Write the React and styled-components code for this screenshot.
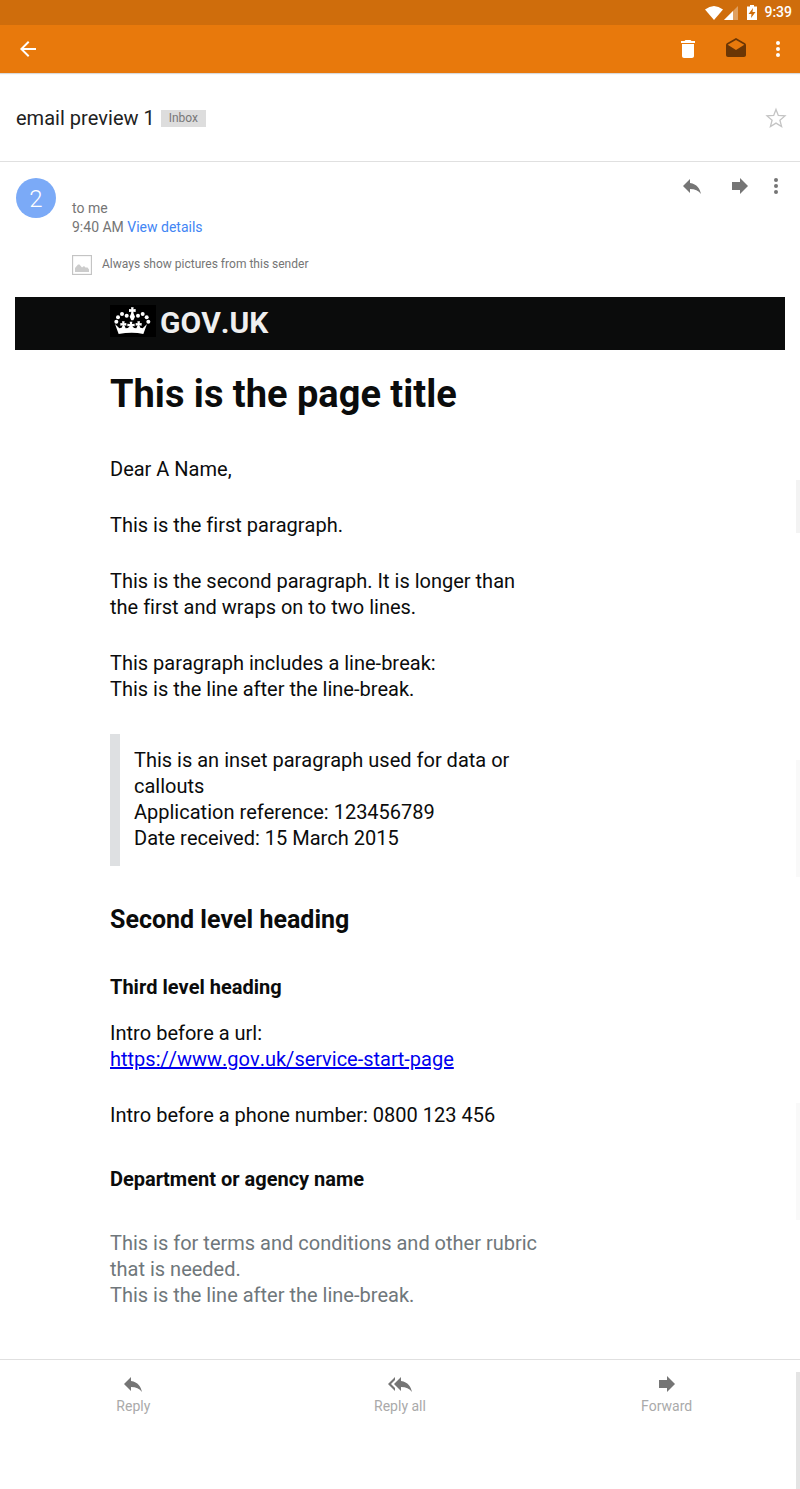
import React from "react";
import styled, { createGlobalStyle } from "styled-components";

const GlobalStyle = createGlobalStyle`
  *, *::before, *::after { box-sizing: border-box; }
  body {
    margin: 0;
    background: #fff;
    font-family: Roboto, "Liberation Sans", sans-serif;
  }
  h1, h2, h3, p { margin: 0; }
`;

const Screen = styled.div`
  position: relative;
  min-height: 100vh;
  display: flex;
  flex-direction: column;
`;

const StatusBar = styled.div`
  display: flex;
  align-items: center;
  justify-content: flex-end;
  height: 25px;
  padding: 0 8px;
  background: #cf6d0c;
  color: #fff;
  font-size: 14px;
  font-weight: 500;
  line-height: 25px;
`;

const StatusIcons = styled.svg`
  display: block;
  margin-right: 6px;
`;

const Toolbar = styled.header`
  display: flex;
  align-items: center;
  height: 48px;
  padding: 0 16px;
  background: #e8790c;
  color: #fff;
  box-shadow: 0 1px 1px rgba(0, 0, 0, 0.15);
`;

const ToolbarActions = styled.div`
  display: flex;
  margin-left: auto;
  gap: 24px;
`;

const IconButton = styled.button`
  display: flex;
  align-items: center;
  justify-content: center;
  width: ${({ $width = 24 }) => $width}px;
  height: 24px;
  padding: 0;
  border: 0;
  background: none;
  color: inherit;
  cursor: pointer;

  svg {
    flex: none;
  }
`;

const SubjectRow = styled.section`
  display: flex;
  align-items: center;
  height: 89px;
  padding: 2px 12px 0 16px;
  border-bottom: 1px solid #e0e0e0;
`;

const Subject = styled.h1`
  color: #212121;
  font-size: 20px;
  font-weight: 400;
  line-height: 26px;
  font-kerning: none;
`;

const Label = styled.span`
  height: 17px;
  margin: 0 auto 0 6px;
  padding: 0 8px;
  background: #ddd;
  color: #777;
  font-size: 12px;
  line-height: 17px;
`;

const StarButton = styled(IconButton)`
  color: #c4c4c4;
`;

const MessageHeader = styled.section`
  display: flex;
  align-items: flex-start;
  gap: 16px;
  padding: 16px 18px 0 16px;
  color: #757575;
`;

const Avatar = styled.div`
  flex: none;
  width: 40px;
  height: 40px;
  border-radius: 50%;
  background: #7baaf7;
  color: #fff;
  font-size: 24px;
  font-weight: 300;
  line-height: 42px;
  text-align: center;
`;

const Sender = styled.div`
  flex: 1;
  padding-top: 21px;
  font-size: 14px;
  line-height: 19px;
`;

const DetailsLink = styled.a`
  color: #4285f4;
  text-decoration: none;
`;

const ShowPictures = styled.button`
  display: flex;
  gap: 10px;
  margin-top: 18px;
  padding: 0;
  border: 0;
  background: none;
  color: #757575;
  font-family: inherit;
  font-size: 12px;
  line-height: 18px;
  font-kerning: none;
  cursor: pointer;
`;

const MessageActions = styled.div`
  display: flex;
  gap: 12px;
  margin-top: -4px;
`;

const Mail = styled.article`
  margin: 22px 15px 0;
  color: #0b0c0c;
  font-kerning: none;
  font-variant-ligatures: none;
`;

const Banner = styled.div`
  padding: 0 10px;
  background: #0b0c0c;
`;

const Column = styled.div`
  max-width: 580px;
  margin: 0 auto;
`;

const BrandLink = styled.a`
  display: flex;
  align-items: center;
  gap: 4px;
  height: 53px;
  color: #efefef;
  font-size: 30px;
  font-weight: 700;
  line-height: 52px;
  text-decoration: none;
`;

const Crown = styled.svg`
  display: block;
  margin-bottom: 6px;
`;

const Brand = styled.span`
  height: 53px;
`;

const Copy = styled.div`
  padding: 0 10px;
  font-size: 20px;
  line-height: 26px;
`;

const Title = styled.h1`
  padding: 21px 0 39px;
  font-size: 38px;
  font-weight: 700;
  line-height: 46px;
`;

const Paragraph = styled.p`
  max-width: 436px;
  margin-bottom: 30px;
`;

const Inset = styled.p`
  max-width: 436px;
  margin-top: 32px;
  padding: 13px 0 15px 14px;
  border-left: 10px solid #dee0e2;
`;

const Heading2 = styled.h2`
  padding: 38px 0 38px;
  font-size: 25px;
  font-weight: 700;
  line-height: 32px;
`;

const Heading3 = styled.h3`
  padding: ${({ $before = 0 }) => $before}px 0 ${({ $after }) => $after}px;
  font-size: 20px;
  font-weight: 700;
  line-height: 26px;
`;

const MailLink = styled.a`
  color: #0000ee;
  text-decoration: underline;
`;

const Terms = styled.p`
  max-width: 440px;
  color: #6f777b;
`;

const ReplyBar = styled.footer`
  display: grid;
  grid-template-columns: repeat(3, 1fr);
  margin-top: 51px;
  padding-top: 12px;
  border-top: 1px solid #e0e0e0;
`;

const ReplyButton = styled.button`
  display: flex;
  flex-direction: column;
  align-items: center;
  padding: 0;
  border: 0;
  background: none;
  color: #aaa;
  font-family: inherit;
  font-size: 14px;
  line-height: 20px;
  cursor: pointer;

  svg {
    color: #757575;
  }
`;

const ScrollThumb = styled.div`
  position: absolute;
  right: 0;
  top: ${({ $top }) => $top}px;
  width: 4px;
  height: ${({ $height }) => $height}px;
  background: ${({ $color }) => $color};
`;

const Icon = ({ children, size = 24 }) => (
  <svg width={size} height="24" viewBox={`0 0 ${size} 24`} fill="currentColor" aria-hidden="true">
    {children}
  </svg>
);

const BackIcon = () => (
  <Icon>
    <path d="M20 11H7.8l5.6-5.6L12 4l-8 8 8 8 1.4-1.4L7.8 13H20z" />
  </Icon>
);

const TrashIcon = () => (
  <Icon>
    <path d="M6 19c0 1.1.9 2 2 2h8c1.1 0 2-.9 2-2V7H6v12zM19 4h-3.500l-1-1h-5l-1 1H5v2h14V4z" />
  </Icon>
);

const OpenMailIcon = () => (
  <Icon>
    <path
      fill="#6b3605"
      d="M22 8c0-.7-.4-1.300-.9-1.700L12 1 2.900 6.300C2.400 6.700 2 7.300 2 8v10c0 1.100.9 2 2 2h16c1.100 0 2-.9 2-2V8zm-10 5L3.700 7.800 12 3l8.300 4.800L12 13z"
    />
  </Icon>
);

const MoreIcon = () => (
  <Icon>
    <circle cx="12" cy="6" r="2" />
    <circle cx="12" cy="12" r="2" />
    <circle cx="12" cy="18" r="2" />
  </Icon>
);

const StarIcon = () => (
  <Icon>
    <path
      d="M12 3.400l2.300 6 6.700.5-5.100 4.300 1.700 6.300-5.600-3.400-5.600 3.400 1.700-6.300L3 9.900l6.700-.5z"
      fill="none"
      stroke="currentColor"
      strokeWidth="1.300"
    />
  </Icon>
);

const ReplyIcon = () => (
  <Icon>
    <path d="M10 9V5l-7 7 7 7v-4.100c5 0 8.500 1.600 11 5.100-1-5-4-10-11-11z" />
  </Icon>
);

const ReplyAllIcon = () => (
  <Icon>
    <path d="M7 8V5l-7 7 7 7v-3l-4-4 4-4zm6 1V5l-7 7 7 7v-4.100c5 0 8.500 1.600 11 5.100-1-5-4-10-11-11z" />
  </Icon>
);

const ForwardIcon = () => (
  <Icon>
    <path d="M12 8V4l8 8-8 8v-4H4V8z" />
  </Icon>
);

const PictureIcon = () => (
  <svg width="20" height="20" viewBox="0 0 20 20" aria-hidden="true">
    <rect x=".5" y=".5" width="19" height="19" fill="#fff" stroke="#c4c4c4" strokeWidth="1.300" />
    <path d="M3 17v-4l3-3.500h1.500l2.500 3 2-1.500 1.500 1.500h2l1.500 2V17z" fill="#ccc" />
  </svg>
);

const crownDots = [
  [19, 50], [24, 37], [36, 27], [50, 32],
  [84, 32], [98, 27], [110, 37], [115, 50],
];

const CrownLogo = () => (
  <Crown width="46" height="32" viewBox="0 0 138 96" aria-hidden="true">
    <rect width="138" height="96" fill="#000" />
    <g fill="#fff">
      {crownDots.map(([x, y]) => (
        <circle key={x} cx={x} cy={y} r="6" />
      ))}
      <path d="M63 7h8l-1 6 7-1v9l-7-1 1 6 4 9-5 11h-6l-5-11 4-9 1-6-7 1v-9l7 1z" />
      <path d="M15 57l13 13 7-2 3-7-7 1v-8l6 1-1-6h8l-1 6 6-1v8l-6-1 4 9 7-1 5-6-7 1v-8l8 1-1-7h8l-1 7 8-1v8l-7-1 5 6 7 1 4-9-6 1v-8l6 1-1-6h8l-1 6 6-1v8l-7-1 3 7 7 2 13-13-11 30Q67 79 26 87z" />
    </g>
  </Crown>
);

export default function App() {
  return (
    <>
      <GlobalStyle />
      <Screen>
        <StatusBar>
          <StatusIcons width="53" height="18" viewBox="0 0 53 18" fill="#fff" aria-hidden="true">
            <path d="M0 5.500Q9-1.500 18 5.500L9 16z" />
            <path d="M33 2v14H19z" opacity=".35" />
            <path d="M28 7v9h-9z" />
            <path
              fillRule="evenodd"
              d="M45 1h4v1.500h3V16H42V2.500h3zM48 4l-4.500 6h3L46 14l4.500-6h-3z"
            />
          </StatusIcons>
          <span>9:39</span>
        </StatusBar>

        <Toolbar>
          <IconButton aria-label="Back">
            <BackIcon />
          </IconButton>
          <ToolbarActions>
            <IconButton aria-label="Delete">
              <TrashIcon />
            </IconButton>
            <IconButton aria-label="Mark as unread">
              <OpenMailIcon />
            </IconButton>
            <IconButton $width={12} aria-label="More options">
              <MoreIcon />
            </IconButton>
          </ToolbarActions>
        </Toolbar>

        <SubjectRow>
          <Subject>email preview 1</Subject>
          <Label>Inbox</Label>
          <StarButton aria-label="Star">
            <StarIcon />
          </StarButton>
        </SubjectRow>

        <MessageHeader>
          <Avatar>2</Avatar>
          <Sender>
            <div>to me</div>
            <div>
              9:40 AM <DetailsLink href="#details">View details</DetailsLink>
            </div>
            <ShowPictures>
              <PictureIcon />
              <span>Always show pictures from this sender</span>
            </ShowPictures>
          </Sender>
          <MessageActions>
            <IconButton $width={36} aria-label="Reply">
              <ReplyIcon />
            </IconButton>
            <IconButton $width={36} aria-label="Forward">
              <ForwardIcon />
            </IconButton>
            <IconButton $width={12} aria-label="More message options">
              <MoreIcon />
            </IconButton>
          </MessageActions>
        </MessageHeader>

        <Mail>
          <Banner>
            <Column>
              <BrandLink href="#gov-uk">
                <CrownLogo />
                <Brand>GOV.UK</Brand>
              </BrandLink>
            </Column>
          </Banner>
          <Copy>
            <Column>
              <Title>This is the page title</Title>
              <Paragraph>Dear A Name,</Paragraph>
              <Paragraph>This is the first paragraph.</Paragraph>
              <Paragraph>
                This is the second paragraph. It is longer than the first and wraps on to two lines.
              </Paragraph>
              <Paragraph>
                This paragraph includes a line-break:
                <br />
                This is the line after the line-break.
              </Paragraph>
              <Inset>
                This is an inset paragraph used for data or callouts
                <br />
                Application reference: 123456789
                <br />
                Date received: 15 March 2015
              </Inset>
              <Heading2>Second level heading</Heading2>
              <Heading3 $after={20}>Third level heading</Heading3>
              <Paragraph>
                Intro before a url:
                <br />
                <MailLink href="https://www.gov.uk/service-start-page">
                  https://www.gov.uk/service-start-page
                </MailLink>
              </Paragraph>
              <Paragraph>Intro before a phone number: 0800 123 456</Paragraph>
              <Heading3 $before={8} $after={38}>
                Department or agency name
              </Heading3>
              <Terms>
                This is for terms and conditions and other rubric that is needed.
                <br />
                This is the line after the line-break.
              </Terms>
            </Column>
          </Copy>
        </Mail>

        <ReplyBar>
          <ReplyButton>
            <ReplyIcon />
            Reply
          </ReplyButton>
          <ReplyButton>
            <ReplyAllIcon />
            Reply all
          </ReplyButton>
          <ReplyButton>
            <ForwardIcon />
            Forward
          </ReplyButton>
        </ReplyBar>

        <ScrollThumb $top={480} $height={53} $color="#f3f3f3" />
        <ScrollThumb $top={760} $height={117} $color="#f9f9f9" />
        <ScrollThumb $top={1103} $height={117} $color="#f9f9f9" />
        <ScrollThumb $top={1372} $height={117} $color="#e4e4e4" />
      </Screen>
    </>
  );
}
